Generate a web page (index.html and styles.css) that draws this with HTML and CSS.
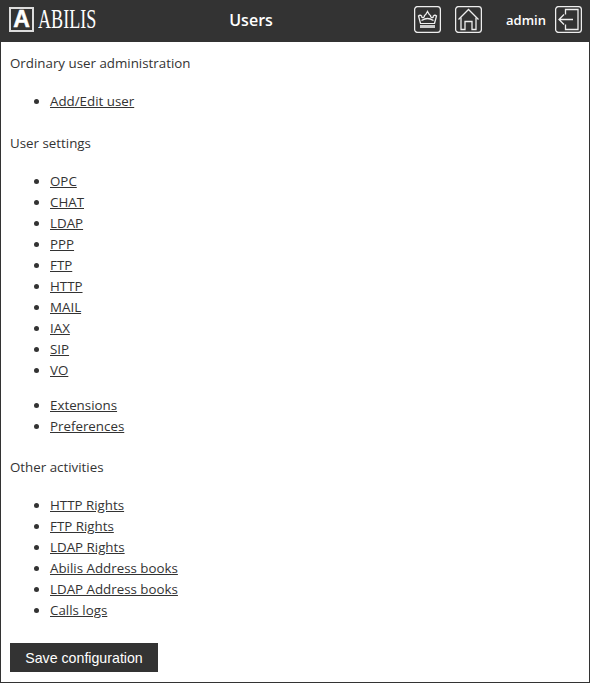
FILE: index.html
```html
<!DOCTYPE html>
<html lang="en">
<head>
    <meta charset="UTF-8">
    <meta name="viewport" content="width=device-width, initial-scale=1.0">
    <title>Users</title>
    <link rel="stylesheet" href="styles.css">
</head>
<body>
    <div id="header">
        <div class="logo">
            <span class="logo-box">A</span>
            <span class="logo-name">ABILIS</span>
        </div>
        <div class="title">Users</div>
        <div class="tools">
            <a class="tool crown" href="#">
                <svg width="27" height="27" viewBox="0 0 27 27" fill="none" stroke="#eee" stroke-width="1.3">
                    <rect x="0.6" y="0.6" width="25.8" height="25.8" rx="3"/>
                    <path d="M6.500 17.500 L4.500 10 C6 8.500 8 9.500 8 11.500 C9.500 12 10.500 11 10.500 9.500 C11.500 9 12.500 7.500 13.500 5.500 C14.500 7.500 15.500 9 16.500 9.500 C16.500 11 17.500 12 19 11.500 C19 9.500 21 8.500 22.500 10 L20.500 17.500"/>
                    <path d="M7.500 14.500 C10 13 12 12.500 13.500 12.500 C15 12.500 17 13 19.500 14.500"/>
                    <path d="M6 17.500 H21" stroke-width="1"/>
                    <path d="M6 20.500 H21" stroke="#ccc" stroke-width="3"/>
                </svg>
            </a>
            <a class="tool home" href="#">
                <svg width="27" height="27" viewBox="0 0 27 27" fill="none" stroke="#eee" stroke-width="1.3">
                    <rect x="0.6" y="0.6" width="25.8" height="25.8" rx="3"/>
                    <path d="M3.500 13.500 L13.500 3.500 L23.500 13.500"/>
                    <path d="M6 11.500 V23.500 H10 V15.500 H17 V23.500 H21 V11.500"/>
                </svg>
            </a>
            <span class="user">admin</span>
            <a class="tool logout" href="#">
                <svg width="27" height="27" viewBox="0 0 27 27" fill="none" stroke="#eee" stroke-width="1.3">
                    <rect x="0.6" y="0.6" width="25.8" height="25.8" rx="3"/>
                    <path d="M10.500 8.500 V3.500 H23 V23.500 H10.500 V18.500"/>
                    <path d="M18 13.500 H4 M9 8.500 L4 13.500 L9 18.500"/>
                </svg>
            </a>
        </div>
    </div>
    <div id="content">
        <p class="section">Ordinary user administration</p>
        <ul>
            <li><a href="#">Add/Edit user</a></li>
        </ul>
        <p class="section">User settings</p>
        <ul>
            <li><a href="#">OPC</a></li>
            <li><a href="#">CHAT</a></li>
            <li><a href="#">LDAP</a></li>
            <li><a href="#">PPP</a></li>
            <li><a href="#">FTP</a></li>
            <li><a href="#">HTTP</a></li>
            <li><a href="#">MAIL</a></li>
            <li><a href="#">IAX</a></li>
            <li><a href="#">SIP</a></li>
            <li><a href="#">VO</a></li>
        </ul>
        <ul class="more">
            <li><a href="#">Extensions</a></li>
            <li><a href="#">Preferences</a></li>
        </ul>
        <p class="section">Other activities</p>
        <ul>
            <li><a href="#">HTTP Rights</a></li>
            <li><a href="#">FTP Rights</a></li>
            <li><a href="#">LDAP Rights</a></li>
            <li><a href="#">Abilis Address books</a></li>
            <li><a href="#">LDAP Address books</a></li>
            <li><a href="#">Calls logs</a></li>
        </ul>
        <button class="save">Save configuration</button>
    </div>
</body>
</html>
```

FILE: styles.css
```css
html, body {
    height: 100%;
}
body {
    margin: 0;
    display: flex;
    flex-direction: column;
    background-color: #fff;
    color: #333;
    font-family: "Open Sans", sans-serif;
    font-size: 13.33px;
    line-height: 21px;
}
#header {
    height: 42px;
    flex: none;
    box-sizing: border-box;
    display: flex;
    align-items: center;
    background-color: #333;
    color: #fff;
    padding: 0 8px 3px 9px;
}
.logo {
    width: 87px;
    flex: none;
    display: flex;
    align-items: center;
    gap: 4px;
}
.logo-box {
    box-sizing: border-box;
    width: 25px;
    height: 25px;
    flex: none;
    border: 2px solid #ddd;
    display: flex;
    align-items: center;
    justify-content: center;
    font-family: "Liberation Sans", sans-serif;
    font-weight: bold;
    font-size: 23px;
    -webkit-text-stroke: 0.5px #fff;
}
.logo-name {
    font-family: "Liberation Serif", serif;
    font-size: 27px;
    line-height: 27px;
    transform: scaleX(0.67);
    transform-origin: left center;
}
.title {
    flex: 1;
    padding: 2px 8px 0 0;
    text-align: center;
    font-size: 16px;
    font-weight: 600;
}
.tools {
    display: flex;
    align-items: center;
}
.tool {
    display: flex;
}
.crown {
    margin-right: 14px;
}
.user {
    margin: 0 9px 0 24px;
    padding-top: 2px;
    font-size: 13px;
    font-weight: 600;
}
#content {
    flex: 1;
    border: 1px solid #333;
    border-top: none;
    padding: 11px 9px 0;
}
.section {
    margin: 0 0 17px;
}
ul {
    margin: 0 0 21px;
    padding: 0 0 0 40px;
}
ul.more {
    margin-top: -7px;
    margin-bottom: 20px;
}
a {
    color: #333;
}
.save {
    display: block;
    margin-top: 22px;
    width: 148px;
    height: 29px;
    border: none;
    padding: 0;
    background-color: #333;
    color: #fff;
    font-family: "Liberation Sans", sans-serif;
    font-size: 14.2px;
}
```
